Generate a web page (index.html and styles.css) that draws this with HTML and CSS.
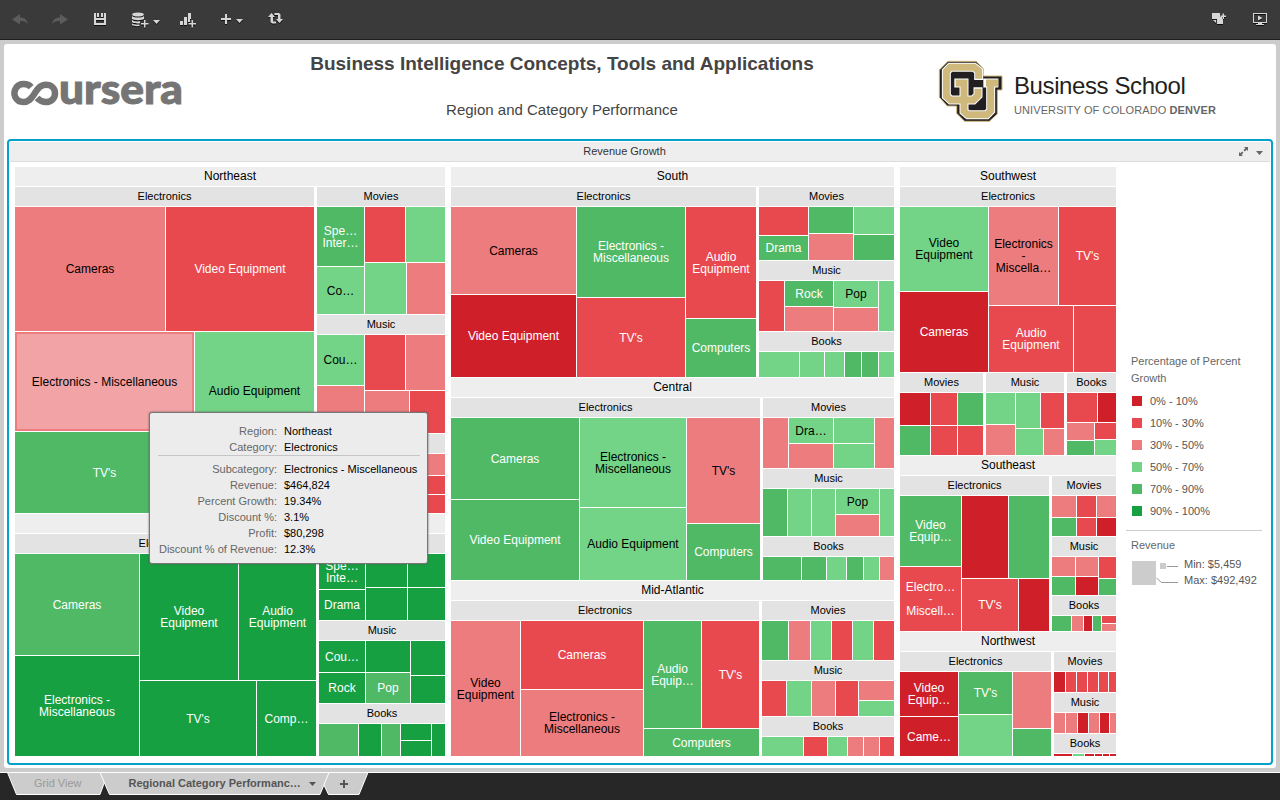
FILE: index.html
```html
<!DOCTYPE html>
<html lang="en">
<head>
<meta charset="utf-8">
<title>Regional Category Performance</title>
<link rel="stylesheet" href="styles.css">
</head>
<body>
<div class="app">
  <header class="toolbar">
    <svg class="tool dim" width="40" height="39" viewBox="0 0 40 39"><path d="M12 19.5l8-5.5v3.500c4 0 7 2 8 6.500c-2-2.500-4.500-3-8-3v3.500z"/></svg>
    <svg class="tool dim" width="40" height="39" viewBox="40 0 40 39"><path d="M68 19.500l-8-5.500v3.500c-4 0-7 2-8 6.500c2-2.500 4.500-3 8-3v3.500z"/></svg>
    <svg class="tool" width="40" height="39" viewBox="80 0 40 39"><path fill-rule="evenodd" d="M94 13h2v5h8v-5h2v12H94zM96 20v3h8v-3zM97 13h2v4h-2zM101 13h2v4h-2z"/></svg>
    <svg class="tool" width="52" height="39" viewBox="120 0 52 39"><ellipse cx="138" cy="14.500" rx="6" ry="2"/><path d="M132 16c2 2 10 2 12 0v3c-2 1.500-10 1.500-12 0zM132 20c2 1.700 6 1.600 8 1.300v2c-2 .4-6 .2-8-1zM132 23.500c2 1.300 5 1.300 7.500 1v1.500c-3 .4-6 0-7.500-1zM144 20h1.500v3h3v1.500h-3v3H144v-3h-3V23h3zM153 20h7l-3.500 4z"/></svg>
    <svg class="tool" width="32" height="39" viewBox="172 0 32 39"><path d="M180 21h3v4h-3zM184 17h3v8h-3zM188 13h3v6h-1v3h-2zM191.500 20h1.500v3h3v1.500h-3v3h-1.500v-3h-3V23h3z"/></svg>
    <svg class="tool" width="52" height="39" viewBox="204 0 52 39"><path d="M225 14h2v4h4v2h-4v4h-2v-4h-4v-2h4zM236 19h7l-3.500 4z"/></svg>
    <svg class="tool" width="40" height="39" viewBox="256 0 40 39"><path d="M268 17l3.500-4 3.500 4h-2v4.500h3v2h-4l-1.500-1.500v-5zM274.500 13h4.500l1.500 1.500V19h2.500l-3.500 4-3.500-4h2v-4h-3.500z"/></svg>
    <span class="spacer"></span>
    <svg class="tool" width="40" height="39" viewBox="1198 0 40 39"><path d="M1212 13h8v4h2v2h1v5h-6v-5h-5zM1213 20h3v3zM1222.500 13.500h1.500v2h2V17h-2v2h-1.500v-2h-2v-1.500h2z"/></svg>
    <svg class="tool" width="42" height="39" viewBox="1238 0 42 39"><path fill-rule="evenodd" d="M1253 13h14v10h-5v1h2v1h-8v-1h2v-1h-5zM1254 14v8h12v-8zM1258 15.500l4.500 2.500-4.500 2.500z"/></svg>
  </header>

  <main class="sheet">
    <div class="banner">
      <svg class="coursera" width="174" height="32" viewBox="10 77 174 32">
        <path class="loop" d="M31.200 87.200C27.500 83 19.500 83 16.300 87.500C12 94 15.500 102 23.500 102C28.500 102 31 99 34 94.500C37.500 89 40 84.800 46 84.800C51 84.800 55 88.300 55 93.400C55 98.300 51 102 46 102C42 102 39.500 100.500 37 98"/>
        <text x="59" y="104" textLength="124" lengthAdjust="spacingAndGlyphs">ursera</text>
      </svg>
      <div class="titles">
        <h1>Business Intelligence Concepts, Tools and Applications</h1>
        <h2>Region and Category Performance</h2>
      </div>
      <div class="school">
        <svg width="65" height="63" viewBox="54 180 195 189">
          <path class="cu-edge" d="M84 184H168L190 206V228H246V270H232V342L208 364H134L110 340V318H82L58 292V210Z"/>
          <path class="cu-white" d="M176 240V213L162 202H91L79 214V288L92 300H160L174 286V262M103 249H132V334L144 344H200L212 332V249M190 249H235"/>
          <path class="cu-gold" d="M176 236V213L162 202H91L79 214V288L92 300H160L174 286V266M107 249H132V334L144 344H200L212 332V249M198 249H235"/>
        </svg>
        <div class="school-name">
          <div class="bs">Business School</div>
          <div class="uni">UNIVERSITY OF COLORADO <b>DENVER</b></div>
        </div>
      </div>
    </div>

    <section class="viz">
      <div class="viz-head">
        <span class="viz-title">Revenue Growth</span>
        <svg class="viz-tools" width="30" height="18" viewBox="0 0 30 18"><path d="M6 4h4v4L8.700 6.700 6.700 8.500 5.500 7.300 7.300 5.300zM1 9l1.300 1.300L4.200 8.500l1.200 1.200L3.600 11.700 5 13H1zM18 8h7l-3.500 4z"/></svg>
      </div>
      <div class="viz-body">
        <div class="treemap" id="treemap"></div>
        <aside class="legend">
          <h3>Percentage of Percent Growth</h3>
          <ul>
            <li><i class="c0"></i>0% - 10%</li>
            <li><i class="c1"></i>10% - 30%</li>
            <li><i class="c2"></i>30% - 50%</li>
            <li><i class="c3"></i>50% - 70%</li>
            <li><i class="c4"></i>70% - 90%</li>
            <li><i class="c5"></i>90% - 100%</li>
          </ul>
          <hr>
          <h4>Revenue</h4>
          <div class="size-key">
            <svg width="50" height="28" viewBox="0 0 50 28"><path fill="#ccc" d="M1 1h24v24H1zM29 3h6v6h-6z"/><path fill="none" stroke="#999" d="M36 6.500h11M25.500 18l5 4.500H47"/></svg>
            <div>Min: $5,459<br>Max: $492,492</div>
          </div>
        </aside>
      </div>
    </section>
  </main>

  <footer class="tabs">
    <svg class="tab-shapes" width="380" height="24" viewBox="0 772 380 24">
      <path d="M7.500 772.500L16.500 794.500H100L108 772.500Z"/>
      <path d="M322.500 782L328.500 794.500H359L368 772.500H329Z"/>
      <path d="M100 772.500L109.500 794.500H320L329 772.500Z"/>
      <path class="mark" d="M309 782h7l-3.500 4zM343 780h2v3h3v2h-3v3h-2v-3h-3v-2h3z"/>
    </svg>
    <span class="tab tab-off">Grid View</span>
    <span class="tab tab-on">Regional Category Performanc…</span>
  </footer>

  <div class="tooltip">
    <dl>
      <dt>Region:</dt><dd>Northeast</dd>
      <dt>Category:</dt><dd>Electronics</dd>
    </dl>
    <dl>
      <dt>Subcategory:</dt><dd>Electronics - Miscellaneous</dd>
      <dt>Revenue:</dt><dd>$464,824</dd>
      <dt>Percent Growth:</dt><dd>19.34%</dd>
      <dt>Discount %:</dt><dd>3.1%</dd>
      <dt>Profit:</dt><dd>$80,298</dd>
      <dt>Discount % of Revenue:</dt><dd>12.3%</dd>
    </dl>
  </div>
</div>
<script src="treemap.js"></script>
</body>
</html>
```
FILE: styles.css
```css
* { box-sizing: border-box; }
body { margin: 0; font-family: "Liberation Sans", Arial, sans-serif; font-size: 11px; color: #000; }
.app { position: relative; display: flex; flex-direction: column; width: 1280px; height: 800px; overflow: hidden; background: #ccc; }

.toolbar { display: flex; flex: 0 0 40px; background: #3a3a3a; border-bottom: 1px solid #1e1e1e; }
.tool { flex: none; fill: #d6d6d6; filter: drop-shadow(0 1px 0 #111); }
.tool.dim { fill: #5c5c5c; filter: none; }
.spacer { flex: 1; }

.sheet { display: flex; flex-direction: column; flex: 0 0 724px; margin: 4px 4px 4px; background: #fff; border-radius: 3px; }
.banner { display: flex; flex: 0 0 95px; padding-left: 6px; }
.coursera { flex: none; margin-top: 33px; overflow: visible; }
.coursera .loop { fill: none; stroke: #757575; stroke-width: 6.500; }
.coursera text { font-family: Lato, sans-serif; font-weight: 900; font-size: 42px; fill: #757575; stroke: #757575; stroke-width: 1; }
.titles { width: 756px; text-align: center; color: #444; }
.titles h1 { margin: 8px 0 0; font-size: 19px; line-height: 24px; white-space: nowrap; }
.titles h2 { margin: 24px 0 0; font-size: 15px; line-height: 20px; font-weight: normal; }
.school { display: flex; gap: 11px; padding-top: 16px; margin-left: -2px; }
.cu-edge { fill: #231f20; stroke: #cfb87c; stroke-width: 3; }
.cu-white { fill: none; stroke: #fff; stroke-width: 27; }
.cu-gold { fill: none; stroke: #cfb87c; stroke-width: 21; }
.school-name { padding-top: 12px; white-space: nowrap; }
.bs { font-size: 24px; line-height: 28px; letter-spacing: -0.4px; color: #231f20; }
.uni { margin-top: 4px; font-size: 11px; line-height: 13px; letter-spacing: 0.1px; color: #666; }

.viz { display: flex; flex-direction: column; width: 1266px; height: 626px; margin-left: 3px; padding: 1px; border: 2px solid #04a1ca; border-radius: 4px; background: #fff; }
.viz-head { display: flex; align-items: center; flex: 0 0 20px; background: #eee; border-bottom: 1px solid #ddd; }
.viz-title { width: 1228px; padding: 0 0 2px 1px; text-align: center; color: #333; }
.viz-tools { fill: #666; }
.viz-body { display: flex; padding: 5px 0 0 5px; }

.treemap { display: flex; flex: none; width: 1101px; height: 589px; }
.split { display: flex; flex: 1 1 0; min-width: 0; min-height: 0; }
.across { flex-direction: row; }
.down { flex-direction: column; }
.gap1 { gap: 1px; }
.gap3 { gap: 3px; }
.gap6 { gap: 6px; }
.head { flex: 0 0 19px; line-height: 19px; text-align: center; background: #e3e3e3; }
.head.region { font-size: 12px; background: #eee; }
.tile { display: flex; flex: 1 1 0; align-items: center; justify-content: center; min-width: 0; min-height: 0; font-size: 12px; line-height: 12px; text-align: center; white-space: pre; color: #fff; }
.c0 { background: #cf202a; }
.c1 { background: #e8494e; }
.c2 { background: #ed7c7e; color: #000; }
.c3 { background: #73d487; color: #000; }
.c4 { background: #4fb965; }
.c5 { background: #17a041; }
.hot { border: 2px solid #ed7c7e; background: #f2a3a5; }

.legend { width: 142px; padding: 186px 0 0 10px; color: #555; }
.legend h3 { margin: 0 0 0 5px; width: 120px; font-size: 11px; line-height: 17px; font-weight: normal; color: #666; }
.legend ul { margin: 3px 0 0 6px; padding: 0; list-style: none; }
.legend li { display: flex; align-items: center; gap: 8px; height: 22px; }
.legend i { width: 10px; height: 10px; }
.legend hr { width: 136px; height: 1px; margin: 8px 0 7px; border: 0; background: #ccc; }
.legend h4 { margin: 0 0 0 5px; font-size: 11px; line-height: 15px; font-weight: normal; color: #666; }
.size-key { display: flex; gap: 3px; margin: 3px 0 0 5px; padding-top: 1px; line-height: 16px; white-space: nowrap; }
.size-key div { margin-top: -1px; }
.size-key svg { margin-top: 3px; }

.tabs { position: relative; display: flex; flex: 1; background: #272727; border-top: 1px solid #fff; }
.tab-shapes { position: absolute; left: 0; top: -1px; fill: #ccc; stroke: #fff; stroke-width: 1; }
.tab-shapes .mark { fill: #555; stroke: none; }
.tab { position: relative; line-height: 20px; white-space: nowrap; }
.tab-off { margin-left: 34px; color: #999; }
.tab-on { margin-left: 47px; font-weight: bold; color: #555; }

.tooltip { position: absolute; left: 149px; top: 412px; width: 279px; height: 152px; padding: 10px 7px 0 8px; background: #ececec; border: 1px solid #777; border-radius: 3px; box-shadow: 0 0 2px #555; }
.tooltip dl { display: grid; grid-template-columns: 119px 1fr; column-gap: 7px; margin: 0; line-height: 16px; white-space: nowrap; }
.tooltip dl + dl { margin-top: 0; padding-top: 5px; border-top: 1px solid #c6c6c6; }
.tooltip dt { color: #666; text-align: right; }
.tooltip dd { margin: 0; }
```
FILE: treemap.js
```js
// A tile is a string: its growth band (0-5) followed by its label.
// A split lists size, node, size, node, ..., and a last node that takes the rest.
function split(dir, gap, parts) {
  const box = document.createElement("div");
  box.className = "split " + dir + " gap" + gap;
  for (let i = 0; i < parts.length; i++) {
    let size = null;
    if (typeof parts[i] === "number") size = parts[i++];
    const el = typeof parts[i] === "string" ? tile(parts[i]) : parts[i];
    if (size !== null) el.style.flex = "0 0 " + size + "px";
    box.append(el);
  }
  return box;
}
function tile(s) {
  const el = document.createElement("div");
  el.className = "tile c" + s[0];
  let label = s.slice(1);
  if (label[0] === "*") { el.classList.add("hot"); label = label.slice(1); }
  el.textContent = label;
  return el;
}
const H = (...p) => split("across", 1, p);
const V = (...p) => split("down", 1, p);
const H3 = (...p) => split("across", 3, p);
function group(name, body, cls) {
  const head = document.createElement("div");
  head.className = "head" + (cls || "");
  head.textContent = name;
  return split("down", 1, [head, body]);
}
const R = (name, body) => group(name, body, " region");
const E = b => group("Electronics", b);
const M = b => group("Movies", b);
const U = b => group("Music", b);
const B = b => group("Books", b);

const west = V(
  346, R("Northeast", H3(299, E(
    V(124, H(150, "2Cameras", "1Video Equipment"),
      H(179, V(99, "2*Electronics - Miscellaneous", "4TV's"), V(118, "3Audio Equipment", "4")))),
    V(127, M(H(47, V(59, "4Spe…\nInter…", "3Co…"),
        V(55, H(40, "1", "3"), H(41, "3", "2")))),
      118, U(H(47, V(50, "3Cou…", "2"), V(55, H(40, "1", "2"), H(44, "2", "1")))),
      B(H(60, "2", V(21, "2", 18, "1", "1")))))),
  R("", H3(301, E(
    H(124, V(101, "4Cameras", "5Electronics -\nMiscellaneous"),
      V(126, H(98, "5Video\nEquipment", "5Audio\nEquipment"), H(116, "5TV's", "5Comp…")))),
    V(86, M(H(46, V(35, "5Spe…\nInte…", "5Drama"), 41, V(33, "5", "5"), V(33, "5", "5"))),
      82, U(H(46, V(31, "5Cou…", "5Rock"), 44, V(31, "5", "4Pop"), V(34, "5", "5"))),
      B(H(39, "4", 22, "5", 18, "4", 30, V(16, "5", "5"), "5"))))));

const middle = V(
  210, R("South", H3(305, E(
    H(125, V(87, "2Cameras", "0Video Equipment"),
      108, V(90, "4Electronics -\nMiscellaneous", "1TV's"),
      V(111, "1Audio\nEquipment", "4Computers"))),
    V(73, M(H(49, V(28, "1", "4Drama"), 44, V(26, "4", "2"), V(27, "3", "4"))),
      70, U(H(25, "1", 48, V(25, "4Rock", "2"), 44, V(26, "3Pop", "2"), "3")),
      B(H(40, "3", 24, "3", 19, "3", 16, "4", 16, "4", "3"))))),
  202, R("Central", H3(309, E(
    H(128, V(81, "4Cameras", "4Video Equipment"),
      106, V(89, "3Electronics -\nMiscellaneous", "3Audio Equipment"),
      V(105, "2TV's", "4Computers"))),
    V(70, M(H(25, "2", 44, V(25, "3Dra…", "2"), 40, V(25, "3", "3"), "2")),
      67, U(H(24, "4", 23, "3", 23, "3", 43, V(25, "3Pop", "2"), "3")),
      B(H(38, "4", 24, "4", 19, "3", 16, "4", 15, "3", "2"))))),
  R("Mid-Atlantic", H3(308, E(
    H(69, "2Video\nEquipment",
      122, V(68, "1Cameras", "2Electronics -\nMiscellaneous"),
      V(107, H(57, "4Audio\nEquip…", "1TV's"), "4Computers"))),
    V(59, M(H(26, "4", 21, "2", 20, "3", 20, "1", 20, "3", "1")),
      55, U(H(24, "1", 24, "3", 23, "2", 22, "1", V(19, "2", "3"))),
      B(H(41, "3", 23, "1", 19, "3", 15, "2", 15, "2", "1"))))));

const east = V(
  288, R("Southwest", V(
    185, E(H(88, V(84, "3Video\nEquipment", "0Cameras"),
      V(98, H(69, "2Electronics\n-\nMiscella…", "1TV's"), H(84, "1Audio\nEquipment", "1")))),
    H3(83, M(H(30, V(32, "0", "4"), 26, V(32, "1", "1"), V(32, "4", "1"))),
      78, U(H(29, V(31, "3", "2"), V(35, H(24, "3", "1"), H(27, "3", "2")))),
      B(V(29, H(30, "1", "0"), H(27, V(17, "2", "4"), V(16, "1", "3"))))))),
  175, R("Southeast", H3(149, E(
    H(61, V(70, "4Video\nEquip…", "1Electro…\n-\nMiscell…"),
      V(82, H(46, "0", "4"), H(56, "1TV's", "0")))),
    V(60, M(H(24, V(21, "2", "4"), 19, V(21, "1", "1"), V(21, "2", "0"))),
      58, U(H(23, V(19, "2", "4"), 22, V(19, "2", "0"), V(21, "1", "4"))),
      B(H(19, "4", 11, "2", 8, "0", 8, "4", V(7, "1", "2")))))),
  R("Northwest", H3(151, E(
    H(58, V(44, "0Video\nEquip…", "0Came…"), 53, V(42, "4TV's", "3"), V(56, "2", "4"))),
    V(40, M(H(11, "0", 10, "1", 10, "1", 10, "1", 9, "1", "1")),
      40, U(H(11, "2", 11, "2", 10, "0", 10, "2", 9, "0", "2")),
      B(H(18, "0", 11, "3", 9, "0", 7, "0", 6, "0", "0"))))));

document.getElementById("treemap").append(split("across", 6, [430, west, 443, middle, east]));
```
